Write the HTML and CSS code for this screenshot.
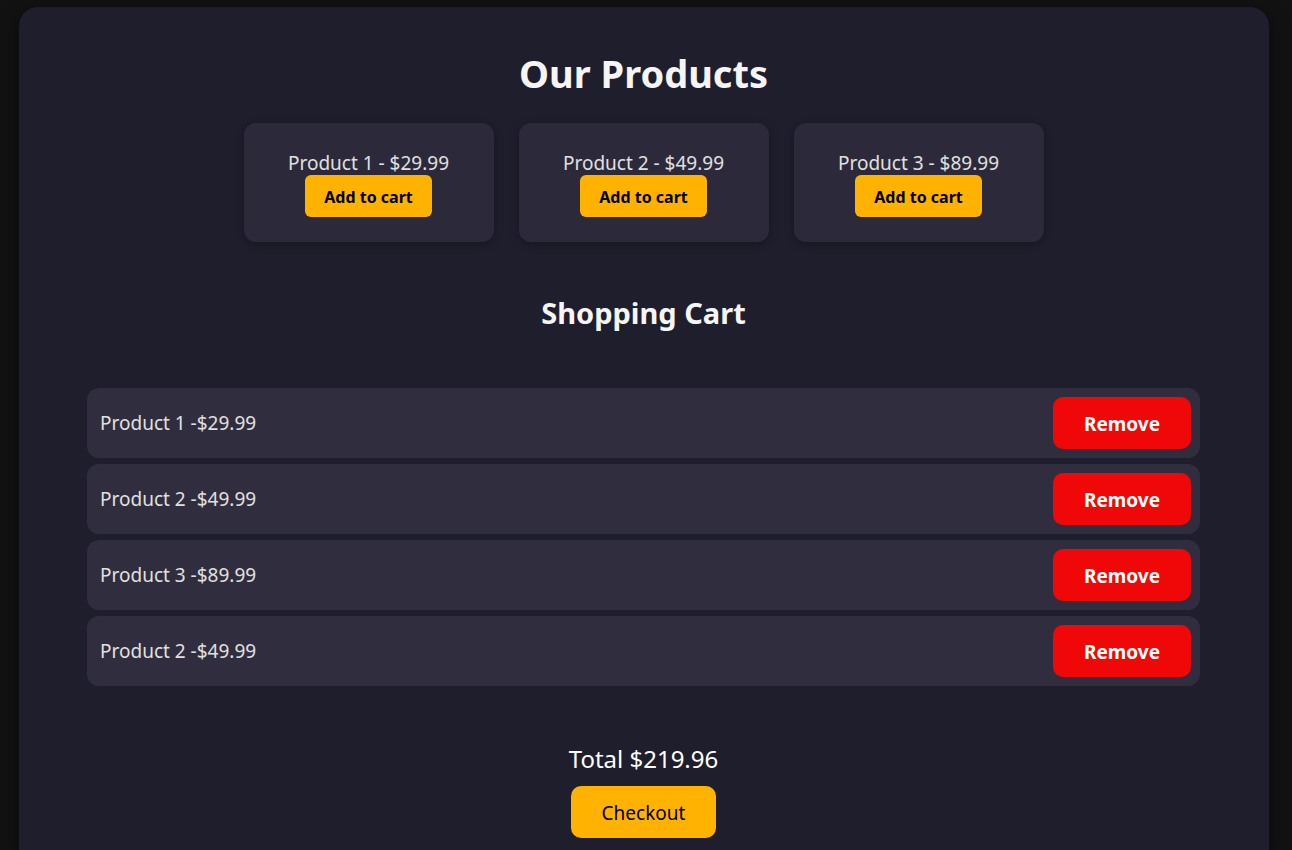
FILE: index.html
```html
<!DOCTYPE html>
<html lang="en">
<head>
<meta charset="utf-8">
<meta name="viewport" content="width=device-width, initial-scale=1">
<title>Our Products</title>
<link rel="stylesheet" href="styles.css">
</head>
<body>
<main class="container">
  <h1 class="title">Our Products</h1>
  <section class="products">
    <article class="product"><span>Product 1 - $29.99</span><button class="add" type="button">Add to cart</button></article>
    <article class="product"><span>Product 2 - $49.99</span><button class="add" type="button">Add to cart</button></article>
    <article class="product"><span>Product 3 - $89.99</span><button class="add" type="button">Add to cart</button></article>
  </section>
  <h2 class="subtitle">Shopping Cart</h2>
  <ul class="cart">
    <li class="item"><span>Product 1 -$29.99</span><button class="remove" type="button">Remove</button></li>
    <li class="item"><span>Product 2 -$49.99</span><button class="remove" type="button">Remove</button></li>
    <li class="item"><span>Product 3 -$89.99</span><button class="remove" type="button">Remove</button></li>
    <li class="item"><span>Product 2 -$49.99</span><button class="remove" type="button">Remove</button></li>
  </ul>
  <section class="summary">
    <p class="total">Total $219.96</p>
    <button class="checkout" type="button">Checkout</button>
  </section>
</main>
</body>
</html>
```
FILE: styles.css
```css
* {
  box-sizing: border-box;
}

body {
  margin: 0;
  padding: 7px 23px 0 19px;
  background: #121212;
  color: #e0e0e0;
  font-family: "Noto Sans", "Open Sans", sans-serif;
  font-size: 19px;
}

button {
  border: 0;
  font-family: inherit;
  cursor: pointer;
}

.container {
  min-height: calc(100vh - 7px);
  padding: 40px 69px 12px 68px;
  border-radius: 19px 19px 0 0;
  background: #1f1e2d;
  box-shadow: 0 5px 19px rgba(0, 0, 0, 0.5);
  text-align: center;
}

.title {
  margin: 0;
  color: #f5f5f5;
  font-size: 38px;
  line-height: 52px;
}

.products {
  display: flex;
  flex-wrap: wrap;
  justify-content: center;
  gap: 25px;
  margin-top: 24px;
}

.product {
  display: flex;
  flex-direction: column;
  align-items: center;
  width: 250px;
  padding: 29px 25px 25px;
  border-radius: 12px;
  background: #2c2a3a;
  box-shadow: 0 2px 10px rgba(0, 0, 0, 0.3);
  line-height: 23px;
}

.add {
  height: 42px;
  padding: 2px 19px 0;
  border-radius: 6px;
  background: #ffb300;
  color: #000;
  font-size: 16px;
  font-weight: 700;
}

.subtitle {
  margin: 51px 0 0;
  color: #f5f5f5;
  font-size: 29px;
  line-height: 40px;
}

.cart {
  display: flex;
  flex-direction: column;
  gap: 6px;
  margin: 55px 0 0;
  padding: 0;
  list-style: none;
}

.item {
  display: flex;
  align-items: center;
  justify-content: space-between;
  padding: 9px 9px 9px 13px;
  border-radius: 12px;
  background: #302e3e;
}

.remove {
  height: 52px;
  padding: 2px 31px 0;
  border-radius: 10px;
  background: #f00808;
  color: #fff;
  font-size: 19px;
  font-weight: 700;
}

.summary {
  margin-top: 56px;
}

.total {
  margin: 0 0 10px;
  color: #fff;
  font-size: 24px;
  line-height: 34px;
}

.checkout {
  height: 52px;
  padding: 2px 31px 0;
  border-radius: 10px;
  background: #ffb300;
  color: #000;
  font-size: 19px;
}
```
